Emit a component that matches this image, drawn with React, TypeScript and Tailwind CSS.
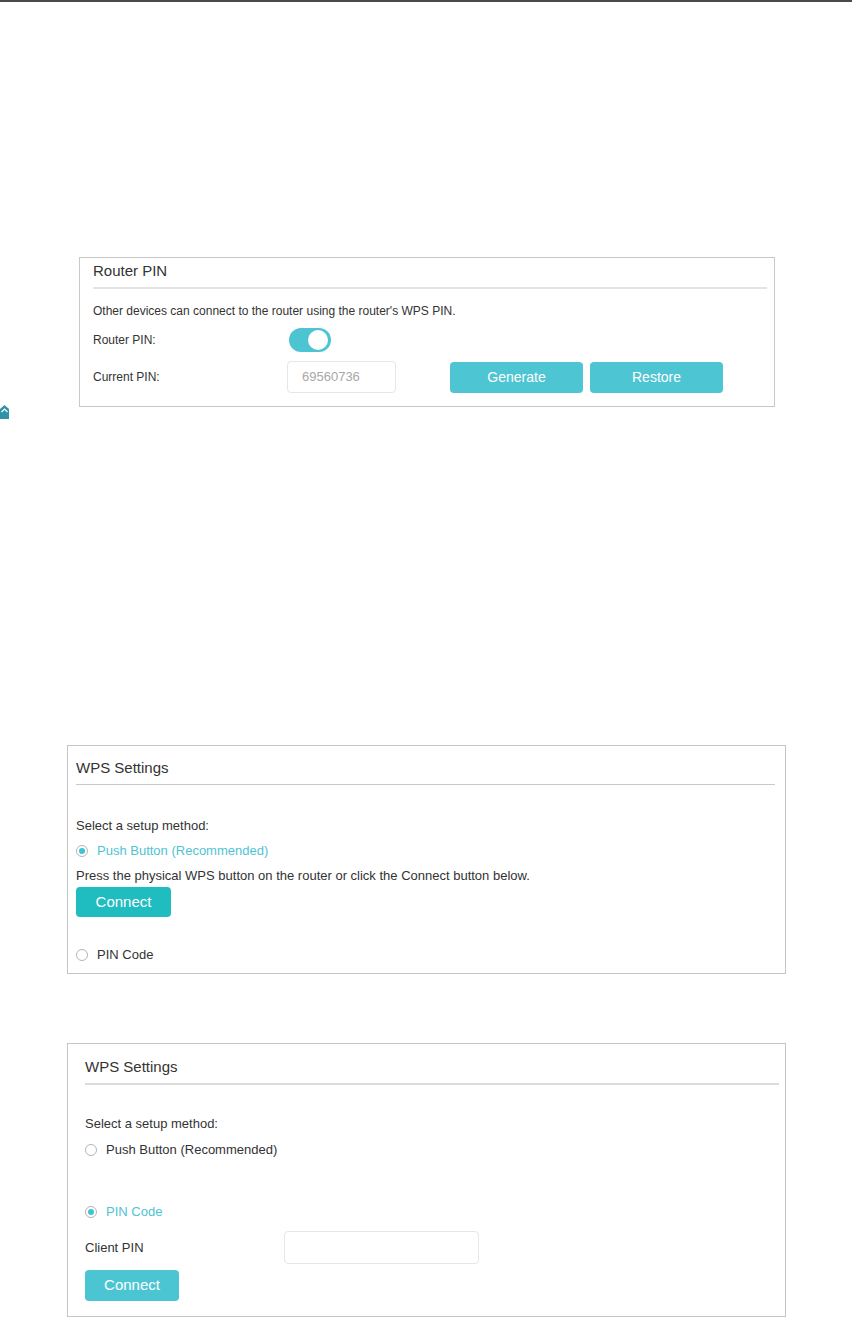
import React from "react";

function Radio({ checked }: { checked?: boolean }) {
  return (
    <span className="w-[12px] h-[12px] rounded-full border border-[#b5b5b5] bg-white flex items-center justify-center shrink-0">
      {checked && <span className="w-[6px] h-[6px] rounded-full bg-[#3fc2d2]" />}
    </span>
  );
}

export default function App() {
  return (
    <div className="relative w-[852px] h-[1318px] bg-white text-[#333333] font-['Liberation_Sans',Arial,sans-serif] overflow-hidden">
      <div className="h-[2px] bg-[#4a4a4a]" />

      {/* Router PIN */}
      <section className="mt-[255px] ml-[79px] w-[696px] h-[150px] border border-[#c8c8c8] pl-[13px] pr-[7px] pt-[4px]">
        <div className="text-[15px] leading-[18px] text-[#333]">Router PIN</div>
        <div className="mt-[7px] h-[2px] bg-[#e3e3e3]" />
        <div className="mt-[14px] text-[12px] leading-[16px]">
          Other devices can connect to the router using the router's WPS PIN.
        </div>
        <div className="mt-[9px] flex items-center h-[24px]">
          <div className="w-[194px] text-[12px] leading-[16px]">Router PIN:</div>
          <div className="ml-[2px] w-[42px] h-[24px] rounded-full bg-[#4cc4d2] flex items-center justify-end pr-[3px]">
            <span className="w-[20px] h-[20px] rounded-full bg-white" />
          </div>
        </div>
        <div className="mt-[9px] flex items-center h-[32px]">
          <div className="w-[194px] text-[12px] leading-[16px]">Current PIN:</div>
          <div className="w-[109px] h-[32px] border border-[#e6e6e6] rounded-[4px] flex items-center pl-[14px] text-[13px] text-[#a8a8a8]">
            69560736
          </div>
          <button className="ml-[54px] w-[133px] h-[31px] rounded-[4px] bg-[#4dc5d3] text-white text-[14px]">
            Generate
          </button>
          <button className="ml-[7px] w-[133px] h-[31px] rounded-[4px] bg-[#4dc5d3] text-white text-[14px]">
            Restore
          </button>
        </div>
      </section>

      {/* bookmark mark */}
      <svg className="absolute left-0 top-[405px]" width="9" height="14" viewBox="0 0 9 14">
        <polygon points="0,14 0,4 4.5,0 9,4 9,14" fill="#2f93a6" />
        <polyline points="1.5,7 4.5,4 7.5,7" fill="none" stroke="#ffffff" strokeWidth="1.2" />
      </svg>

      {/* WPS Settings 1 */}
      <section className="mt-[338px] ml-[67px] w-[719px] h-[229px] border border-[#c4c4c4] pl-[8px] pr-[10px] pt-[13px]">
        <div className="text-[15px] leading-[18px] text-[#333]">WPS Settings</div>
        <div className="mt-[7px] h-px bg-[#c8c8c8]" />
        <div className="mt-[33px] text-[13px] leading-[16px]">Select a setup method:</div>
        <div className="mt-[9px] flex items-center h-[16px] gap-[9px]">
          <Radio checked />
          <span className="text-[13px] leading-[16px] text-[#4fc3d4]">Push Button (Recommended)</span>
        </div>
        <div className="mt-[9px] text-[13px] leading-[16px]">
          Press the physical WPS button on the router or click the Connect button below.
        </div>
        <button className="mt-[3px] w-[95px] h-[30px] rounded-[4px] bg-[#1fbcc0] text-white text-[15px]">
          Connect
        </button>
        <div className="mt-[30px] flex items-center h-[16px] gap-[9px]">
          <Radio />
          <span className="text-[13px] leading-[16px]">PIN Code</span>
        </div>
      </section>

      {/* WPS Settings 2 */}
      <section className="mt-[69px] ml-[67px] w-[719px] h-[274px] border border-[#c4c4c4] pl-[17px] pr-[6px] pt-[14px]">
        <div className="text-[15px] leading-[18px] text-[#333]">WPS Settings</div>
        <div className="mt-[7px] h-[2px] bg-[#dcdcdc]" />
        <div className="mt-[31px] text-[13px] leading-[16px]">Select a setup method:</div>
        <div className="mt-[10px] flex items-center h-[16px] gap-[9px]">
          <Radio />
          <span className="text-[13px] leading-[16px]">Push Button (Recommended)</span>
        </div>
        <div className="mt-[46px] flex items-center h-[16px] gap-[9px]">
          <Radio checked />
          <span className="text-[13px] leading-[16px] text-[#4fc3d4]">PIN Code</span>
        </div>
        <div className="mt-[11px] flex items-center h-[33px]">
          <div className="w-[199px] text-[13px] leading-[16px]">Client PIN</div>
          <div className="w-[195px] h-[33px] border border-[#e6e6e6] rounded-[4px]" />
        </div>
        <button className="mt-[6px] w-[94px] h-[31px] rounded-[4px] bg-[#4cc5d3] text-white text-[15px]">
          Connect
        </button>
      </section>
    </div>
  );
}
